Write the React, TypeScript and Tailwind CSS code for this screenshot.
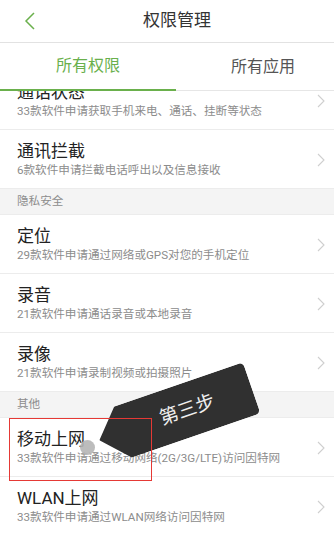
import React from "react"

type Row = { kind: "row"; title: string; desc: string } | { kind: "section"; label: string }

const rows: Row[] = [
  { kind: "row", title: "通话状态", desc: "33款软件申请获取手机来电、通话、挂断等状态" },
  { kind: "row", title: "通讯拦截", desc: "6款软件申请拦截电话呼出以及信息接收" },
  { kind: "section", label: "隐私安全" },
  { kind: "row", title: "定位", desc: "29款软件申请通过网络或GPS对您的手机定位" },
  { kind: "row", title: "录音", desc: "21款软件申请通话录音或本地录音" },
  { kind: "row", title: "录像", desc: "21款软件申请录制视频或拍摄照片" },
  { kind: "section", label: "其他" },
  { kind: "row", title: "移动上网", desc: "33款软件申请通过移动网络(2G/3G/LTE)访问因特网" },
  { kind: "row", title: "WLAN上网", desc: "33款软件申请通过WLAN网络访问因特网" },
]

function Chevron() {
  return (
    <svg width="8" height="14" viewBox="0 0 8 14" fill="none">
      <path d="M1 1l6 6-6 6" stroke="#cfcfcf" strokeWidth="1.1" />
    </svg>
  )
}

function PermissionRow({ title, desc }: { title: string; desc: string }) {
  return (
    <div className="flex items-center border-b border-[#ececec] pl-[17px] pr-[9px] pt-[12px] pb-[11px]">
      <div className="flex-1 min-w-0">
        <div className="text-[17px] leading-[18px] text-[#222]">{title}</div>
        <div className="mt-[3px] text-[11.6px] leading-[14px] text-[#8c8c8c] whitespace-nowrap">{desc}</div>
      </div>
      <Chevron />
    </div>
  )
}

function SectionHeader({ label }: { label: string }) {
  return (
    <div className="h-[26px] flex items-center bg-[#f4f4f4] border-b border-[#ececec] pl-[17px] text-[11.6px] text-[#8c8c8c]">
      {label}
    </div>
  )
}

export default function App() {
  return (
    <div
      className="relative w-[334px] h-[535px] overflow-hidden bg-white"
      style={{ fontFamily: 'Roboto, "Noto Sans CJK SC", "Noto Sans", sans-serif' }}
    >
      {/* header */}
      <div className="relative z-10 h-[43px] flex items-center border-b border-[#e2e2e2] bg-white">
        <div className="w-[24px]" />
        <svg width="11" height="18" viewBox="0 0 11 18" fill="none">
          <path d="M10 1L2 9l8 8" stroke="#6ab04c" strokeWidth="1.5" />
        </svg>
        <div className="flex-1 text-center pr-[15px] text-[17px] text-[#333]">权限管理</div>
      </div>

      {/* tabs */}
      <div className="relative z-10 h-[48px] flex bg-white border-b border-[#e6e6e6]">
        <div className="w-[176px] flex items-center justify-center text-[16px] text-[#6ab04c] border-b-2 border-[#6ab04c] -mb-[1px]">
          所有权限
        </div>
        <div className="flex-1 flex items-center justify-center pl-[16px] text-[16px] text-[#555]">所有应用</div>
      </div>

      {/* list */}
      <div className="-mt-[20px]">
        {rows.map((r, i) =>
          r.kind === "row" ? (
            <PermissionRow key={i} title={r.title} desc={r.desc} />
          ) : (
            <SectionHeader key={i} label={r.label} />
          )
        )}
      </div>

      {/* step tag */}
      <div className="absolute left-[95px] top-[387px] w-[161px] h-[54px] rotate-[-19deg]">
        <svg className="absolute inset-0" width="161" height="54" viewBox="0 0 161 54">
          <path d="M25 0H156a5 5 0 0 1 5 5V49a5 5 0 0 1-5 5H25L0 27Z" fill="#303030" />
        </svg>
        <div className="relative h-full flex items-center justify-center pl-[25px] text-[19px] text-[#eee]">第三步</div>
      </div>

      {/* highlight */}
      <div className="absolute left-[9px] top-[418px] w-[143px] h-[63px] border border-[#e53935]" />
      <div className="absolute left-[80px] top-[440px] w-[15px] h-[15px] rounded-full bg-[#b5b5b5] opacity-90" />
    </div>
  )
}
